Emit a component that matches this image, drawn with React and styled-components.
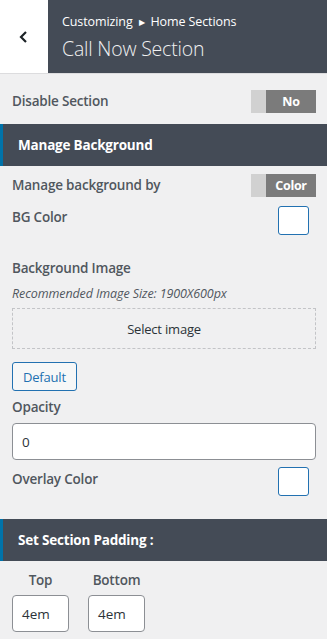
import React from "react";
import styled, { createGlobalStyle } from "styled-components";

const Global = createGlobalStyle`
  html, body {
    margin: 0;
    padding: 0;
    background: #f0f0f1;
  }
  body {
    font-family: "Open Sans", "Noto Sans", sans-serif;
    color: #50575e;
  }
  * { box-sizing: border-box; }
`;

const Panel = styled.div`
  width: 327px;
  min-height: 639px;
  background: #f0f0f1;
  overflow: hidden;
`;

const Header = styled.div`
  display: flex;
  height: 74px;
  border-bottom: 1px solid #dcdcde;
`;

const Back = styled.div`
  width: 48px;
  background: #fff;
  display: flex;
  align-items: center;
  justify-content: center;
`;

const Titles = styled.div`
  flex: 1;
  background: #444b56;
  padding: 13px 0 0 14px;
  color: #fff;
`;

const Crumb = styled.div`
  font-size: 12.5px;
  line-height: 18px;
  letter-spacing: -0.1px;
  span {
    font-size: 8px;
    margin: 0 6px;
    position: relative;
    top: -1px;
  }
`;

const Title = styled.div`
  font-size: 19.5px;
  font-weight: 300;
  line-height: 26px;
  margin-top: 4px;
  color: #f0f0f1;
  letter-spacing: -0.2px;
`;

const Row = styled.div`
  display: flex;
  align-items: center;
  justify-content: space-between;
  padding: 0 11px 0 12px;
  height: ${(p) => p.h || 32}px;
  margin-top: ${(p) => p.mt || 0}px;
`;

const Label = styled.div`
  font-size: 13.5px;
  font-weight: 600;
  color: #50575e;
  letter-spacing: -0.2px;
  margin-top: ${(p) => p.up || 0}px;
`;

const Toggle = styled.div`
  display: flex;
  width: 65px;
  height: 23px;
  &::before {
    content: "";
    width: 15px;
    background: #d1d1d1;
  }
`;

const ToggleOn = styled.div`
  flex: 1;
  background: #7b7b7b;
  color: #fff;
  font-weight: 700;
  font-size: 12.5px;
  display: flex;
  align-items: center;
  justify-content: center;
  letter-spacing: -0.3px;
`;

const SectionHead = styled.div`
  background: #444b56;
  border-left: 3px solid #0073aa;
  height: 42px;
  display: flex;
  align-items: center;
  padding-left: 15px;
  color: #fff;
  font-weight: 700;
  font-size: 13.5px;
  letter-spacing: -0.2px;
  margin-top: ${(p) => p.mt || 0}px;
`;

const Swatch = styled.div`
  width: 31px;
  height: 29px;
  background: #fff;
  border: 1px solid #2271b1;
  border-radius: 3px;
  margin-right: 7px;
`;

const Block = styled.div`
  padding: 0 11px 0 12px;
  margin-top: ${(p) => p.mt || 0}px;
`;

const Hint = styled.div`
  font-style: italic;
  font-size: 12.5px;
  color: #50575e;
  margin-top: 8px;
  letter-spacing: -0.1px;
`;

const Dropzone = styled.div`
  margin-top: 6px;
  height: 41px;
  border: 1px dashed #c3c4c7;
  display: flex;
  align-items: center;
  justify-content: center;
  font-size: 13px;
  color: #2c3338;
  letter-spacing: -0.2px;
`;

const Button = styled.div`
  margin-top: 13px;
  display: inline-flex;
  align-items: center;
  height: 29px;
  padding: 0 10px;
  border: 1px solid #2271b1;
  border-radius: 3px;
  color: #2271b1;
  font-size: 13px;
  background: #f6f7f7;
  letter-spacing: -0.2px;
`;

const Input = styled.div`
  margin-top: 7px;
  height: 37px;
  width: ${(p) => p.w || "100%"};
  border: 1px solid #8c8f94;
  border-radius: 4px;
  background: #fff;
  display: flex;
  align-items: center;
  padding-left: 9px;
  font-size: 13.5px;
  color: #2c3338;
`;

const Padding = styled.div`
  display: flex;
  gap: 19px;
  padding: 0 12px;
  margin-top: 10px;
`;

const PadCol = styled.div`
  display: flex;
  flex-direction: column;
  align-items: center;
  width: 57px;
  ${Input} {
    margin-top: 6px;
  }
`;

export default function App() {
  return (
    <Panel>
      <Global />
      <Header>
        <Back>
          <svg width="12" height="14" viewBox="0 0 12 14">
            <path d="M8 2 L3 7 L8 12" fill="none" stroke="#1d2327" strokeWidth="2.2" />
          </svg>
        </Back>
        <Titles>
          <Crumb>
            Customizing<span>▶</span>Home Sections
          </Crumb>
          <Title>Call Now Section</Title>
        </Titles>
      </Header>

      <Row h={34} mt={10}>
        <Label>Disable Section</Label>
        <Toggle>
          <ToggleOn>No</ToggleOn>
        </Toggle>
      </Row>

      <SectionHead mt={6}>Manage Background</SectionHead>

      <Row h={26} mt={6}>
        <Label>Manage background by</Label>
        <Toggle>
          <ToggleOn>Color</ToggleOn>
        </Toggle>
      </Row>

      <Row h={30} mt={7}>
        <Label up={-6}>BG Color</Label>
        <Swatch />
      </Row>

      <Block mt={24}>
        <Label>Background Image</Label>
        <Hint>Recommended Image Size: 1900X600px</Hint>
        <Dropzone>Select image</Dropzone>
        <Button>Default</Button>
      </Block>

      <Block mt={7}>
        <Label>Opacity</Label>
        <Input>0</Input>
      </Block>

      <Row h={30} mt={6}>
        <Label up={-4}>Overlay Color</Label>
        <Swatch />
      </Row>

      <SectionHead mt={23}>Set Section Padding :</SectionHead>

      <Padding>
        <PadCol>
          <Label>Top</Label>
          <Input w="57px">4em</Input>
        </PadCol>
        <PadCol>
          <Label>Bottom</Label>
          <Input w="57px">4em</Input>
        </PadCol>
      </Padding>
    </Panel>
  );
}
